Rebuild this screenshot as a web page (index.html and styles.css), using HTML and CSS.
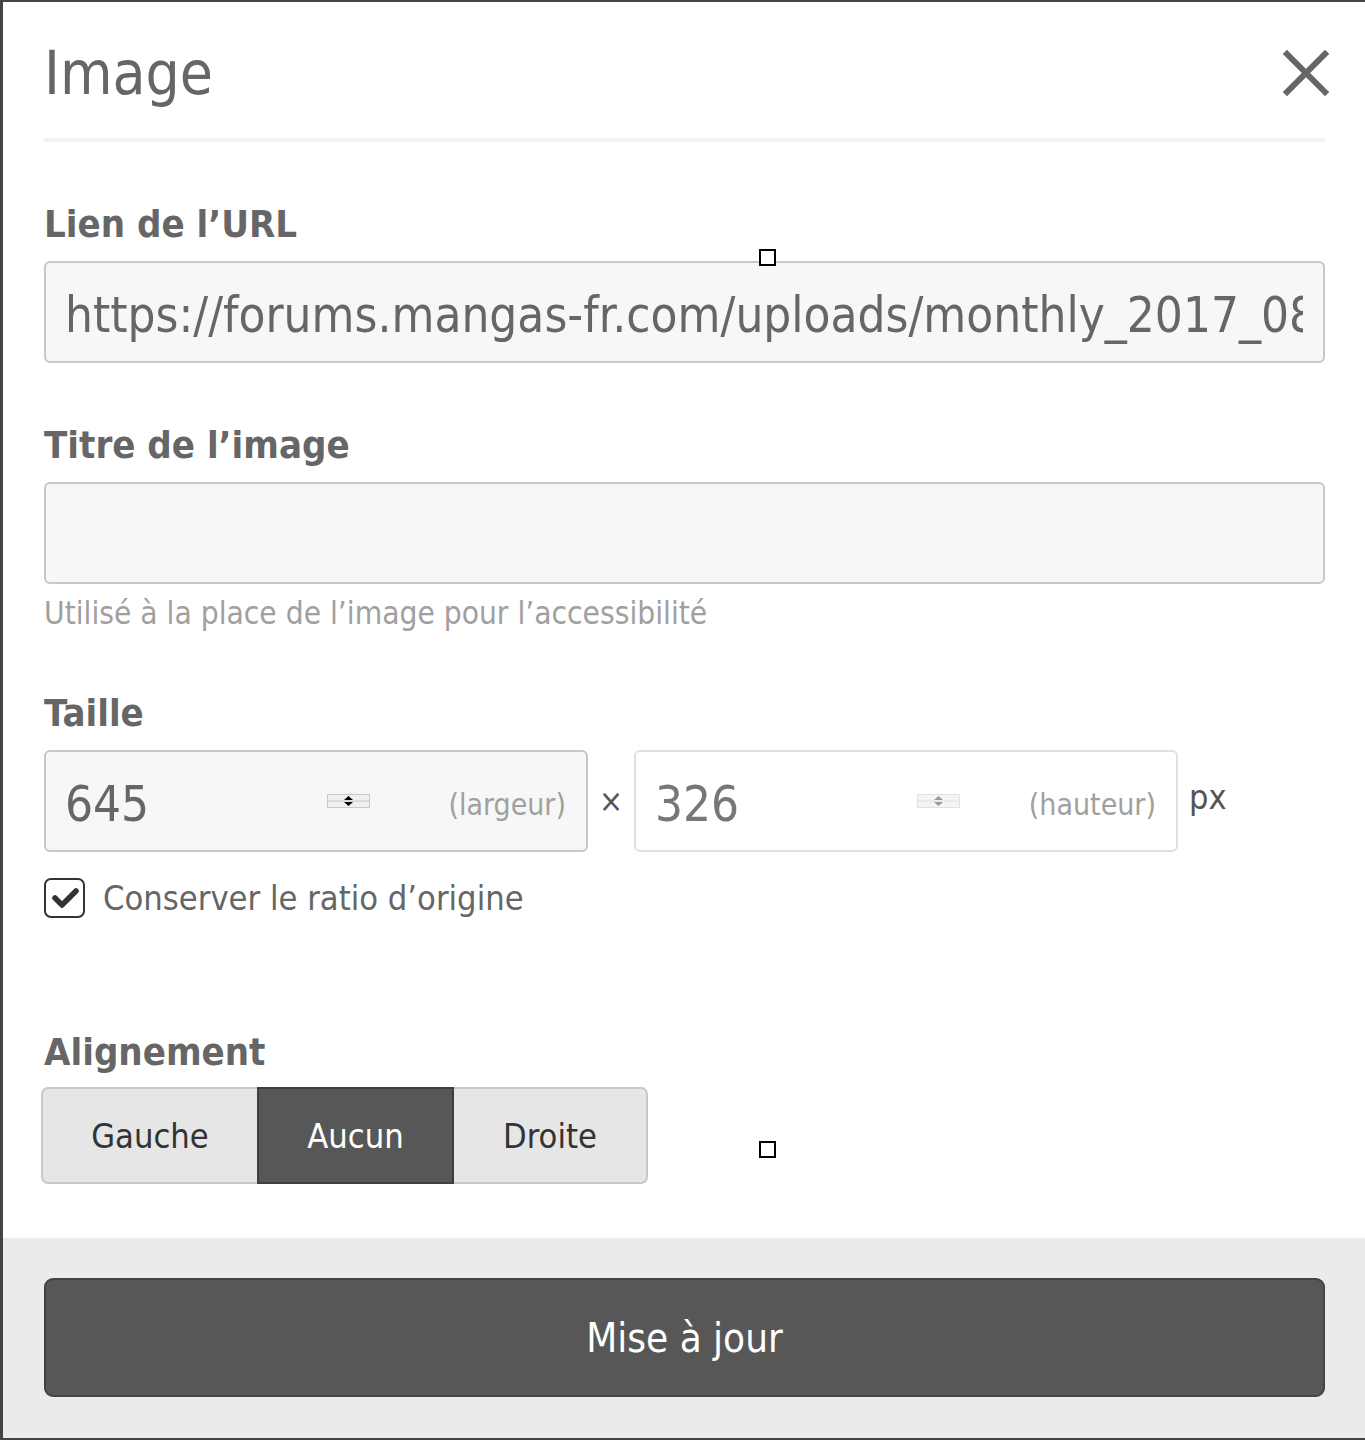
FILE: index.html
```html
<!DOCTYPE html>
<html lang="fr">
<head>
<meta charset="utf-8">
<title>Image</title>
<link rel="stylesheet" href="styles.css">
</head>
<body>
<div class="dialog">
  <header class="dlg-head">
    <h1 class="dlg-title">Image</h1>
    <button class="close" aria-label="Fermer">
      <svg width="48" height="48" viewBox="0 0 48 48"><path d="M5 5 L43 43 M43 5 L5 43" stroke="#666" stroke-width="6" stroke-linecap="square" fill="none"/></svg>
    </button>
  </header>
  <main class="dlg-body">
    <section class="field">
      <label class="lbl">Lien de l’URL</label>
      <div class="input"><span class="val url">https://forums.mangas-fr.com/uploads/monthly_2017_08</span></div>
    </section>
    <section class="field">
      <label class="lbl">Titre de l’image</label>
      <div class="input"></div>
      <p class="help">Utilisé à la place de l’image pour l’accessibilité</p>
    </section>
    <section class="field size-field">
      <label class="lbl">Taille</label>
      <div class="size-row">
        <div class="input num">
          <span class="val">645</span>
          <svg class="spin" width="43" height="16" viewBox="0 0 43 16"><rect x="0.5" y="1.5" width="42" height="13" fill="#f0f0f0" stroke="#c8c8c8"/><path d="M0.5 8H42.5" stroke="#c8c8c8"/><path d="M17 7L21.5 3L26 7Z M17 9L21.5 13L26 9Z" fill="#000"/></svg>
          <span class="hint">(largeur)</span>
        </div>
        <span class="times">×</span>
        <div class="input num light">
          <span class="val">326</span>
          <svg class="spin" width="43" height="16" viewBox="0 0 43 16"><rect x="0.5" y="1.5" width="42" height="13" fill="#f4f4f4" stroke="#e2e2e2"/><path d="M0.5 8H42.5" stroke="#e2e2e2"/><path d="M17 7L21.5 3L26 7Z M17 9L21.5 13L26 9Z" fill="#999"/></svg>
          <span class="hint">(hauteur)</span>
        </div>
        <span class="px">px</span>
      </div>
      <div class="check-row">
        <span class="checkbox"><svg width="36" height="36" viewBox="0 0 36 36"><path d="M8 18L15 25L29 11" stroke="#333" stroke-width="5.5" fill="none" stroke-linecap="round" stroke-linejoin="round"/></svg></span>
        <span class="check-lbl">Conserver le ratio d’origine</span>
      </div>
    </section>
    <section class="field align-field">
      <label class="lbl">Alignement</label>
      <div class="btn-group">
        <button class="seg seg-left">Gauche</button>
        <button class="seg seg-mid active">Aucun</button>
        <button class="seg seg-right">Droite</button>
      </div>
    </section>
  </main>
  <footer class="dlg-foot">
    <button class="submit">Mise à jour</button>
  </footer>
  <span class="handle h1"></span>
  <span class="handle h2"></span>
</div>
</body>
</html>
```

FILE: styles.css
```css
html, body {
  margin: 0;
  padding: 0;
}
body {
  background: #444;
  width: 1365px;
  height: 1440px;
  overflow: hidden;
  font-family: "DejaVu Sans Condensed", "DejaVu Sans", sans-serif;
  color: #666;
}
.dialog {
  position: relative;
  margin: 2px 0 0 3px;
  height: 1436px;
  background: #fff;
  display: flex;
  flex-direction: column;
}
.dlg-head {
  margin: 0 40px 0 41px;
  padding-top: 41px;
  padding-bottom: 35px;
  border-bottom: 4px solid #f2f2f2;
  display: flex;
  align-items: center;
  justify-content: space-between;
}
.dlg-title {
  margin: 0;
  font-size: 60px;
  line-height: 60px;
  font-weight: normal;
  color: #666;
}
.close {
  border: 0;
  background: none;
  padding: 0;
  margin-right: -5px;
  width: 48px;
  height: 48px;
  display: block;
}
.close svg { display: block; }
.dlg-body {
  flex: 1;
  padding: 0 40px 0 41px;
}
.field {
  display: flex;
  flex-direction: column;
}
.lbl {
  display: block;
  font-size: 38px;
  line-height: 38px;
  font-weight: bold;
  color: #666;
  margin-top: 63px;
  margin-bottom: 18px;
}
.input {
  box-sizing: border-box;
  height: 102px;
  border: 2px solid #c8c8c8;
  border-radius: 6px;
  background: #f7f7f7;
  padding: 0 20px 0 19px;
  display: flex;
  align-items: center;
  overflow: hidden;
  white-space: nowrap;
  font-size: 49px;
  color: #666;
}
.val, .hint {
  padding-top: 7px;
}
.url {
  flex: 1;
  min-width: 0;
  overflow: hidden;
}
.help {
  margin: 9px 0 0;
  font-size: 31.4px;
  line-height: 40px;
  color: #a0a0a0;
}
.size-field .lbl { margin-top: 61px; }
.size-row {
  display: flex;
  align-items: center;
}
.num {
  width: 544px;
  flex: none;
}
.num .val { width: 262px; flex: none; }
.num .spin { display: block; flex: none; }
.num .hint {
  margin-left: auto;
  font-size: 30px;
  color: #a0a0a0;
}
.num.light {
  background: #fff;
  border-color: #e0e0e0;
}
.num.light .val { color: #777; }
.times {
  width: 46px;
  text-align: center;
  font-size: 32px;
  color: #555;
}
.px {
  margin-left: 11px;
  font-size: 34px;
  color: #555;
  margin-top: -8px;
}
.check-row {
  display: flex;
  align-items: center;
  margin-top: 26px;
}
.checkbox {
  box-sizing: border-box;
  width: 41px;
  height: 40px;
  border: 2px solid #333;
  border-radius: 7px;
  display: flex;
  align-items: center;
  justify-content: center;
}
.checkbox svg { display: block; }
.check-lbl {
  margin-left: 18px;
  font-size: 34.2px;
  color: #666;
}
.align-field .lbl { margin-top: 115px; margin-bottom: 16px; }
.btn-group {
  display: flex;
  margin-left: -3px;
}
.seg {
  box-sizing: border-box;
  height: 97px;
  background: #e6e6e6;
  border: 2px solid #c8c8c8;
  font-family: inherit;
  font-size: 34.2px;
  color: #333;
  padding: 0;
}
.seg-left { width: 216px; border-radius: 7px 0 0 7px; border-right: 0; }
.seg-mid { width: 197px; }
.seg-right { width: 194px; border-radius: 0 7px 7px 0; border-left: 0; }
.seg.active {
  background: #575757;
  border-color: #3e3e3e;
  color: #fff;
}
.dlg-foot {
  height: 200px;
  box-sizing: border-box;
  background: #ebebeb;
  padding: 40px 40px 0 41px;
}
.submit {
  display: block;
  width: 100%;
  height: 119px;
  box-sizing: border-box;
  background: #575757;
  border: 2px solid #444;
  border-radius: 9px;
  color: #fff;
  font-family: inherit;
  font-size: 40px;
}
.handle {
  position: absolute;
  box-sizing: border-box;
  width: 17px;
  height: 17px;
  background: #fff;
  border: 2px solid #000;
}
.h1 { left: 756px; top: 247px; }
.h2 { left: 756px; top: 1139px; }
```
